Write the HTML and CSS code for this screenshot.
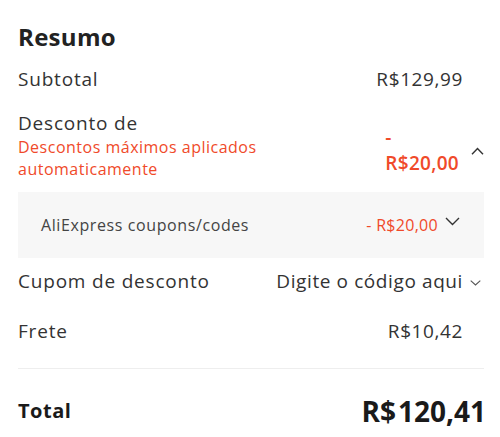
FILE: index.html
```html
<!DOCTYPE html>
<html lang="pt-BR">
<head>
    <meta charset="UTF-8">
    <meta name="viewport" content="width=device-width, initial-scale=1.0">
    <title>Resumo</title>
    <link rel="stylesheet" href="styles.css">
</head>
<body>
    <div class="summary">
        <h2 class="title">Resumo</h2>

        <div class="row row-subtotal">
            <span class="label">Subtotal</span>
            <div class="value-wrap">
                <span class="value">R$129,99</span>
                <span class="slot"></span>
            </div>
        </div>

        <div class="row row-discount">
            <div class="discount-info">
                <div class="label label-tight">Desconto de</div>
                <div class="hint">Descontos máximos aplicados automaticamente</div>
            </div>
            <div class="value-wrap discount-side">
                <span class="value value-red">- R$20,00</span>
                <span class="slot">
                    <svg class="chev-up" width="13" height="8" viewBox="0 0 13 8"><path d="M1 7.2 L6.5 1.4 L12 7.2" fill="none" stroke="#333" stroke-width="1.4"/></svg>
                </span>
            </div>
        </div>

        <div class="coupons">
            <span class="coupons-label">AliExpress coupons/codes</span>
            <div class="coupons-right">
                <span class="coupons-value">- R$20,00</span>
                <svg width="15" height="9" viewBox="0 0 15 9"><path d="M1 1 L7.5 7.5 L14 1" fill="none" stroke="#333" stroke-width="1.4"/></svg>
            </div>
        </div>

        <div class="row row-code">
            <span class="label">Cupom de desconto</span>
            <div class="value-wrap">
                <span class="value">Digite o código aqui</span>
                <span class="slot">
                    <svg class="chev-small" width="11" height="6" viewBox="0 0 11 6"><path d="M0.7 0.7 L5.5 5 L10.3 0.7" fill="none" stroke="#555" stroke-width="1.1"/></svg>
                </span>
            </div>
        </div>

        <div class="row row-shipping">
            <span class="label">Frete</span>
            <div class="value-wrap">
                <span class="value">R$10,42</span>
                <span class="slot"></span>
            </div>
        </div>

        <div class="divider"></div>

        <div class="row row-total">
            <span class="total-label">Total</span>
            <span class="total-value"><span class="cur">R$</span>120,41</span>
        </div>
    </div>
</body>
</html>
```

FILE: styles.css
```css
body {
    margin: 0;
    background: #fff;
    font-family: "Open Sans", "Noto Sans", Arial, sans-serif;
    color: #333;
}
.summary {
    padding: 21px 16px 0 18px;
}
.title {
    margin: 0;
    font-size: 24px;
    line-height: 32px;
    font-weight: 700;
    letter-spacing: 0.3px;
    color: #222;
}
.row {
    display: flex;
    justify-content: space-between;
    align-items: center;
}
.row-subtotal { margin-top: 13px; }
.row-discount { margin-top: 19px; }
.row-code { margin-top: 10px; }
.row-shipping { margin-top: 24px; }
.row-total { margin-top: 24px; }
.label {
    font-size: 19px;
    line-height: 26px;
    letter-spacing: 0.8px;
}
.label-tight {
    line-height: 25px;
}
.hint {
    font-size: 16px;
    line-height: 22px;
    letter-spacing: 0.5px;
    color: #f04a2a;
    width: 260px;
}
.value-wrap {
    display: flex;
    align-items: center;
}
.value {
    font-size: 19px;
    line-height: 26px;
    letter-spacing: 0.6px;
}
.value-red {
    color: #f04a2a;
    font-weight: 600;
    letter-spacing: 0.3px;
    width: min-content;
    margin-right: 4px;
}
.discount-side {
    margin-top: 8px;
}
.slot {
    width: 21px;
    display: flex;
    align-items: center;
}
.chev-up {
    margin-left: 8px;
    margin-top: 3px;
}
.chev-small {
    margin-left: 7px;
    margin-top: 4px;
}
.coupons {
    margin-top: 12px;
    height: 66px;
    background: #f7f7f7;
    display: flex;
    justify-content: space-between;
    align-items: center;
    padding: 0 24px 0 23px;
}
.coupons-label {
    font-size: 16px;
    line-height: 22px;
    letter-spacing: 0.6px;
    color: #444;
}
.coupons-right {
    display: flex;
    align-items: center;
    gap: 7px;
}
.coupons-value {
    font-size: 16px;
    line-height: 22px;
    letter-spacing: 0.3px;
    color: #f04a2a;
}
.coupons-right svg {
    margin-top: -8px;
}
.divider {
    margin-top: 24px;
    height: 1px;
    background: #eee;
}
.total-label {
    font-size: 20px;
    line-height: 28px;
    font-weight: 700;
    letter-spacing: 0.5px;
    color: #1a1a1a;
}
.total-value {
    font-size: 28px;
    line-height: 36px;
    font-weight: 700;
    color: #1a1a1a;
    margin-right: -2px;
}
.cur {
    margin-right: 2px;
}
```
